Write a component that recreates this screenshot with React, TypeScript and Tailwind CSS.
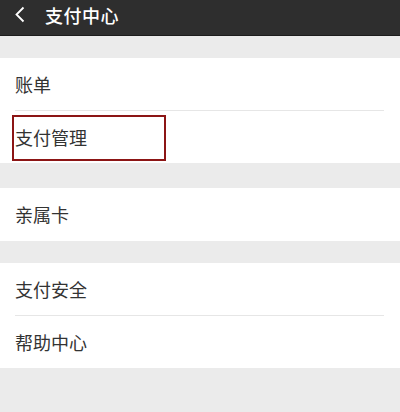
const font = { fontFamily: '"Noto Sans CJK SC", "Noto Sans", sans-serif' }

function Row({ label, divider, highlight, h = 52 }: { label: string; divider?: boolean; highlight?: boolean; h?: number }) {
  return (
    <div className="relative bg-white">
      <div className={`${h === 53 ? 'h-[53px]' : 'h-[52px]'} flex items-center pl-[15px] text-[18px] text-[#333333]`}>{label}</div>
      {divider && <div className="ml-[15px] mr-[16px] h-px bg-[#e6e6e6]" />}
      {highlight && <div className="absolute left-[12px] top-[4px] w-[154px] h-[46px] border-2 border-[#8c1515]" />}
    </div>
  )
}

export default function App() {
  return (
    <div className="w-[400px] h-[412px] bg-[#ebebeb] overflow-hidden" style={font}>
      <div className="h-[36px] bg-[#2e2e2e] flex items-start pt-[3px] text-white border-b border-[#1c1c1c]">
        <svg width="12" height="20" viewBox="0 0 12 20" className="ml-[14px] mt-[2px]">
          <path d="M9.5 2.5 L2.5 9.5 L9.5 16.5" fill="none" stroke="#ffffff" strokeWidth="1.8" />
        </svg>
        <span className="ml-[19px] text-[18px] leading-[24px] font-medium tracking-[0.5px]">支付中心</span>
      </div>
      <div className="h-[22px]" />
      <Row label="账单" divider />
      <Row label="支付管理" highlight />
      <div className="h-[25px]" />
      <Row label="亲属卡" h={53} />
      <div className="h-[22px]" />
      <Row label="支付安全" divider />
      <Row label="帮助中心" />
    </div>
  )
}
